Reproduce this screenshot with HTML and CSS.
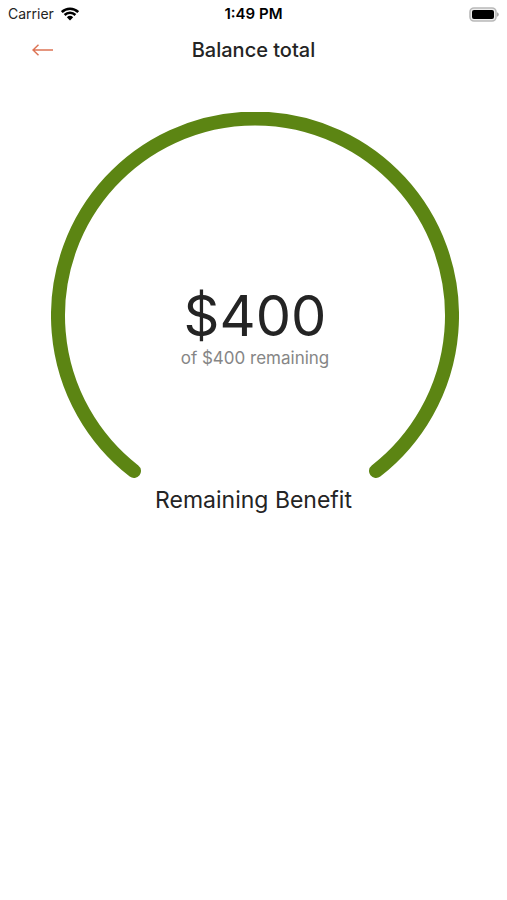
FILE: index.html
```
<!DOCTYPE html>
<html lang="en">
<head>
<meta charset="utf-8">
<meta name="viewport" content="width=device-width, initial-scale=1">
<title>Balance total</title>
<link rel="stylesheet" href="styles.css">
</head>
<body>
<div class="status">
  <div class="carrier">
    <span>Carrier</span>
    <svg class="wifi" viewBox="0 0 18 14" aria-hidden="true">
      <path d="M.8 5a11.700 11.700 0 0 1 16.400 0M3.600 8a7.700 7.700 0 0 1 10.800 0" fill="none" stroke="#000" stroke-width="2.5"/>
      <path d="M5.800 10.300a4.700 4.700 0 0 1 6.400 0L9 13.600z"/>
    </svg>
  </div>
  <time class="time">1:49 PM</time>
  <svg class="battery" viewBox="0 0 30 15" aria-hidden="true">
    <rect x="1" y="1" width="26" height="13" rx="4" fill="#eee" stroke="#b9b9b9" stroke-width="1.6"/>
    <rect x="3" y="3" width="22" height="9" rx="2"/>
    <path d="M28 5.300c2.400.8 2.400 3.600 0 4.400z" fill="#aaa"/>
  </svg>
</div>
<header class="nav">
  <button class="back" type="button" aria-label="Back">
    <svg viewBox="0 0 22 12" aria-hidden="true"><path d="M21 6H1M6.500 .8L1 6l5.500 5.200"/></svg>
  </button>
  <h1 class="title">Balance total</h1>
</header>
<main>
  <div class="gauge">
    <svg class="arc" viewBox="0 0 408 367" aria-hidden="true"><path d="M83 359A197 197 0 1 1 325 359"/></svg>
    <div class="reading">
      <p class="amount">$400</p>
      <p class="detail">of $400 remaining</p>
    </div>
  </div>
  <h2 class="caption">Remaining Benefit</h2>
</main>
</body>
</html>
```
FILE: styles.css
```
* { box-sizing: border-box; }

body {
  margin: 0;
  background: #fff;
  color: #242424;
  font-family: Inter, "Liberation Sans", sans-serif;
}

h1, h2, p { margin: 0; }

svg { display: block; }

.status {
  display: grid;
  grid-template-columns: 1fr auto 1fr;
  align-items: center;
  height: 28px;
  padding: 0 8px;
  font-size: 14px;
  line-height: 20px;
}

.carrier {
  display: flex;
  align-items: center;
  gap: 7px;
}

.wifi { width: 18px; height: 14px; }

.time {
  color: #000;
  font-size: 15px;
  font-weight: 600;
}

.battery {
  width: 30px;
  height: 15px;
  justify-self: end;
}

.nav {
  display: grid;
  grid-template-columns: 1fr auto 1fr;
  align-items: center;
  height: 44px;
  padding: 0 16px;
}

.back {
  justify-self: start;
  padding: 16px;
  border: 0;
  background: none;
}

.back svg {
  width: 22px;
  height: 12px;
  fill: none;
  stroke: #dd7455;
  stroke-width: 1.5;
}

.title {
  font-size: 20px;
  font-weight: 500;
  line-height: 28px;
}

.gauge {
  display: grid;
  margin: 40px 48px 0 51px;
}

.arc, .reading { grid-area: 1 / 1; }

.arc {
  width: 100%;
  fill: none;
  stroke: #5c8513;
  stroke-width: 14;
  stroke-linecap: round;
}

.reading {
  align-self: center;
  padding-top: 60px;
  text-align: center;
}

.amount {
  font-size: 56px;
  line-height: 64px;
}

.detail {
  color: #868686;
  font-size: 17px;
  line-height: 20px;
}

.caption {
  margin-top: 4px;
  font-size: 23px;
  font-weight: 400;
  line-height: 34px;
  text-align: center;
}
```
